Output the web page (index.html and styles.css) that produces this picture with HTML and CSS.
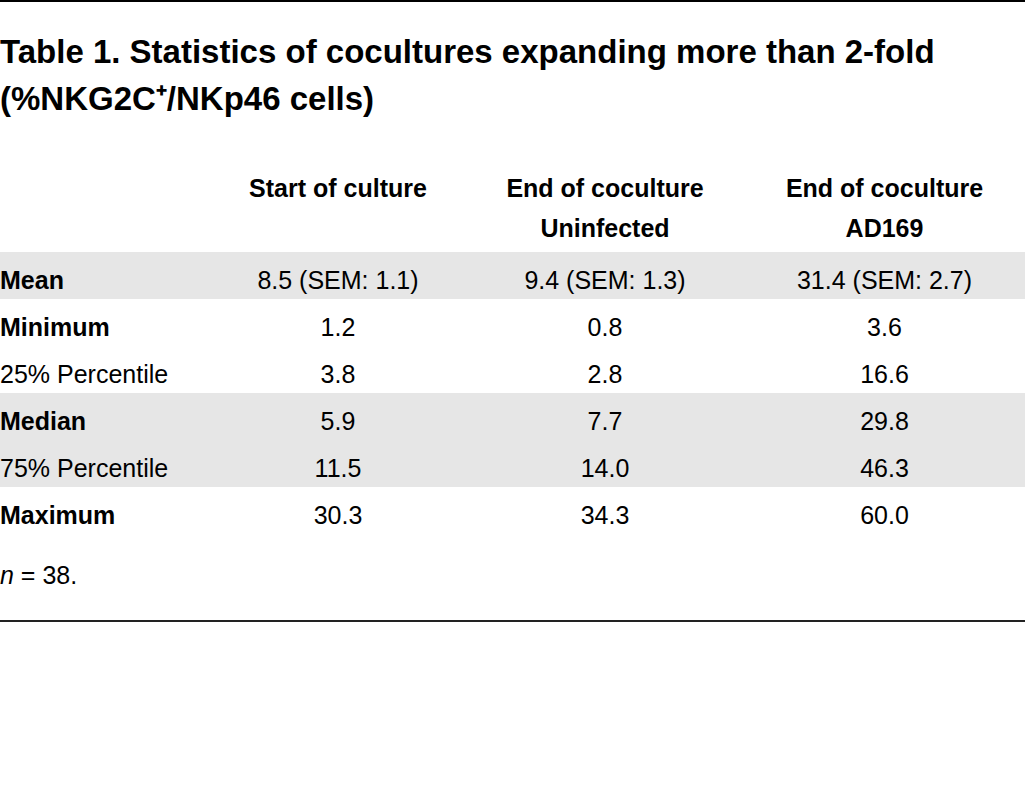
FILE: index.html
```html
<!DOCTYPE html>
<html lang="en">
<head>
<meta charset="utf-8">
<title>Table 1</title>
<link rel="stylesheet" href="styles.css">
</head>
<body>
<div class="page">
  <h1 class="title">Table 1. Statistics of cocultures expanding more than 2-fold (%NKG2C⁺/NKp46 cells)</h1>
  <table class="stats">
    <colgroup>
      <col class="c-label">
      <col class="c-1">
      <col class="c-2">
      <col class="c-3">
    </colgroup>
    <thead>
      <tr>
        <th></th>
        <th>Start of culture</th>
        <th>End of coculture<br>Uninfected</th>
        <th>End of coculture<br>AD169</th>
      </tr>
    </thead>
    <tbody>
      <tr class="shade"><td class="lbl b">Mean</td><td>8.5 (SEM: 1.1)</td><td>9.4 (SEM: 1.3)</td><td>31.4 (SEM: 2.7)</td></tr>
      <tr><td class="lbl b">Minimum</td><td>1.2</td><td>0.8</td><td>3.6</td></tr>
      <tr><td class="lbl">25% Percentile</td><td>3.8</td><td>2.8</td><td>16.6</td></tr>
      <tr class="shade"><td class="lbl b">Median</td><td>5.9</td><td>7.7</td><td>29.8</td></tr>
      <tr class="shade"><td class="lbl">75% Percentile</td><td>11.5</td><td>14.0</td><td>46.3</td></tr>
      <tr><td class="lbl b">Maximum</td><td>30.3</td><td>34.3</td><td>60.0</td></tr>
    </tbody>
  </table>
  <p class="note"><i>n</i> = 38.</p>
</div>
</body>
</html>
```
FILE: styles.css
```css
html, body {
  margin: 0;
  padding: 0;
  background: #fff;
}
body {
  font-family: "Liberation Sans", Arial, sans-serif;
  color: #000;
}
.page {
  width: 1025px;
  border-top: 2px solid #000;
  border-bottom: 2px solid #222;
  padding-top: 26px;
  padding-bottom: 0;
}
.title {
  margin: 0;
  font-size: 33px;
  font-weight: 700;
  line-height: 47px;
  padding-right: 80px;
}
.stats {
  margin-top: 46px;
  width: 1025px;
  border-collapse: collapse;
  table-layout: fixed;
  font-size: 25px;
}
.c-label { width: 210px; }
.c-1 { width: 256px; }
.c-2 { width: 278px; }
.c-3 { width: 281px; }
.stats th {
  font-weight: 700;
  text-align: center;
  vertical-align: top;
  line-height: 40px;
  padding: 0 0 4px 0;
}
.stats td {
  text-align: center;
  line-height: 36px;
  padding: 10px 0 1px 0;
  white-space: nowrap;
}
.stats td.lbl {
  text-align: left;
}
.stats td.b {
  font-weight: 700;
}
.shade td {
  background: #e6e6e6;
}
.note {
  margin: 23px 0 0 0;
  font-size: 25px;
  line-height: 36px;
  padding-bottom: 27px;
}
```
